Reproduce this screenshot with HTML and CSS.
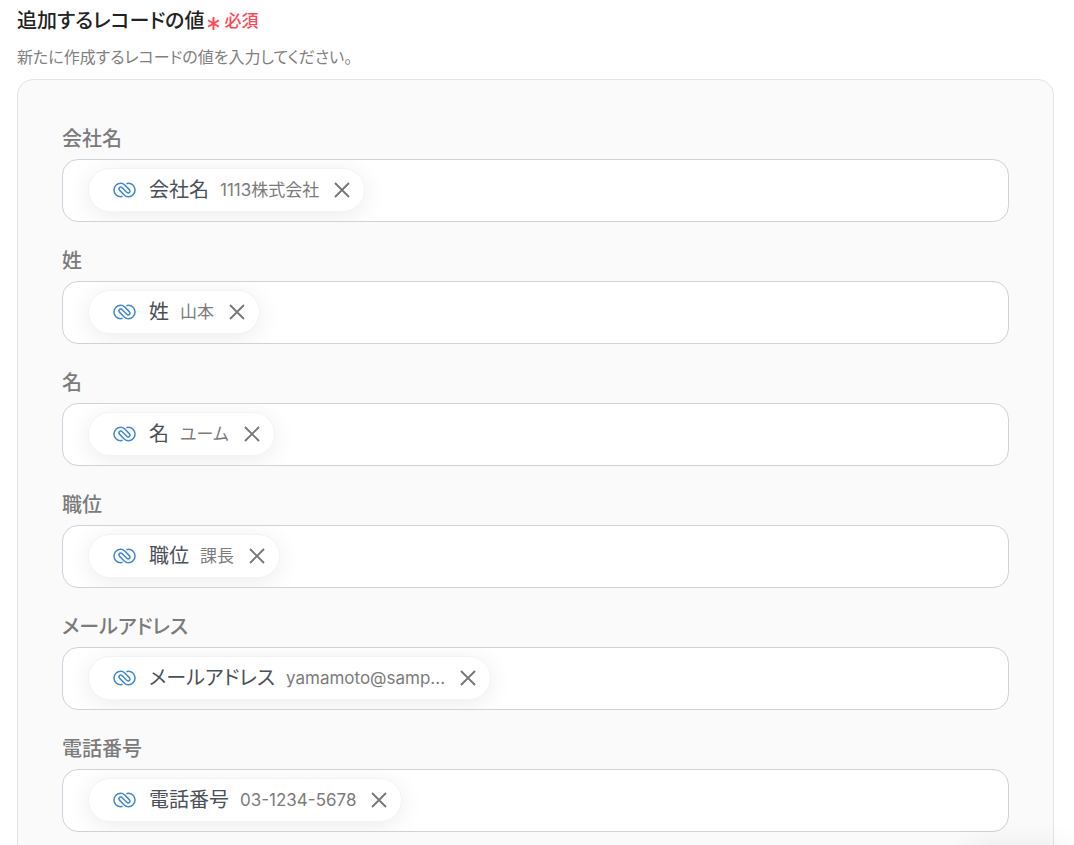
FILE: index.html
```html
<!DOCTYPE html>
<html lang="ja">
<head>
<meta charset="UTF-8">
<meta name="viewport" content="width=device-width, initial-scale=1.0">
<title>追加するレコードの値</title>
<link rel="stylesheet" href="styles.css">
</head>
<body>
<svg class="sprite" aria-hidden="true">
    <symbol id="icon-link" viewBox="0 0 24 16">
        <path d="M10 14.6C9.3 14.9 8.6 15 8 15A7 7 0 0 1 8 1C9.700 1 11 1.600 12 2.600L17 7.600C19 9.600 16.400 12.400 14.400 10.400L9.600 5.600C7.600 3.600 5 6.400 7 8.400L12 13.400C13 14.400 14.300 15 16 15A7 7 0 0 0 16 1C15.400 1 14.700 1.100 14 1.400"/>
    </symbol>
    <symbol id="icon-close" viewBox="0 0 16 16">
        <path d="M1 1L15 15M15 1L1 15"/>
    </symbol>
</svg>
<main class="container">
    <div class="heading">
        <h1 class="title">追加するレコードの値</h1>
        <span class="required">
            <svg class="asterisk" viewBox="0 0 12 12" aria-hidden="true"><path d="M6 0V12M1 3L11 9M11 3L1 9"/></svg>
            必須
        </span>
    </div>
    <p class="description">新たに作成するレコードの値を入力してください。</p>
    <form class="panel">
        <div class="field">
            <label class="label" for="company">会社名</label>
            <div class="input-box">
                <span class="chip">
                    <svg class="link-icon"><use href="#icon-link"/></svg>
                    <span class="chip-name">会社名</span>
                    <span class="chip-value">1113株式会社</span>
                    <button class="remove-btn" type="button" aria-label="削除"><svg class="close-icon"><use href="#icon-close"/></svg></button>
                </span>
                <input class="text-input" id="company" type="text">
            </div>
        </div>
        <div class="field">
            <label class="label" for="lastName">姓</label>
            <div class="input-box">
                <span class="chip">
                    <svg class="link-icon"><use href="#icon-link"/></svg>
                    <span class="chip-name">姓</span>
                    <span class="chip-value">山本</span>
                    <button class="remove-btn" type="button" aria-label="削除"><svg class="close-icon"><use href="#icon-close"/></svg></button>
                </span>
                <input class="text-input" id="lastName" type="text">
            </div>
        </div>
        <div class="field">
            <label class="label" for="firstName">名</label>
            <div class="input-box">
                <span class="chip">
                    <svg class="link-icon"><use href="#icon-link"/></svg>
                    <span class="chip-name">名</span>
                    <span class="chip-value">ユーム</span>
                    <button class="remove-btn" type="button" aria-label="削除"><svg class="close-icon"><use href="#icon-close"/></svg></button>
                </span>
                <input class="text-input" id="firstName" type="text">
            </div>
        </div>
        <div class="field">
            <label class="label" for="position">職位</label>
            <div class="input-box">
                <span class="chip">
                    <svg class="link-icon"><use href="#icon-link"/></svg>
                    <span class="chip-name">職位</span>
                    <span class="chip-value">課長</span>
                    <button class="remove-btn" type="button" aria-label="削除"><svg class="close-icon"><use href="#icon-close"/></svg></button>
                </span>
                <input class="text-input" id="position" type="text">
            </div>
        </div>
        <div class="field">
            <label class="label" for="email">メールアドレス</label>
            <div class="input-box">
                <span class="chip">
                    <svg class="link-icon"><use href="#icon-link"/></svg>
                    <span class="chip-name">メールアドレス</span>
                    <span class="chip-value">yamamoto@samp...</span>
                    <button class="remove-btn" type="button" aria-label="削除"><svg class="close-icon"><use href="#icon-close"/></svg></button>
                </span>
                <input class="text-input" id="email" type="text">
            </div>
        </div>
        <div class="field">
            <label class="label" for="phone">電話番号</label>
            <div class="input-box">
                <span class="chip">
                    <svg class="link-icon"><use href="#icon-link"/></svg>
                    <span class="chip-name">電話番号</span>
                    <span class="chip-value">03-1234-5678</span>
                    <button class="remove-btn" type="button" aria-label="削除"><svg class="close-icon"><use href="#icon-close"/></svg></button>
                </span>
                <input class="text-input" id="phone" type="text">
            </div>
        </div>
    </form>
</main>
<div class="bottom-bar"></div>
</body>
</html>
```
FILE: styles.css
```css
* {
    box-sizing: border-box;
}
body {
    margin: 0;
    background-color: #fff;
    color: #222;
    font-family: Inter, "Noto Sans CJK JP", sans-serif;
    font-feature-settings: "palt";
}
.sprite {
    display: none;
}
.container {
    padding: 8px 20px 20px 17px;
}
.heading {
    display: flex;
    align-items: center;
    gap: 3px;
}
.title {
    margin: 0;
    font-size: 20px;
    font-weight: 500;
    line-height: 24px;
}
.required {
    display: flex;
    align-items: center;
    gap: 4px;
    color: #ff4757;
    font-size: 17px;
    font-weight: 500;
    line-height: 26px;
}
.asterisk {
    width: 13px;
    height: 13px;
    margin-top: 4px;
    fill: none;
    stroke: currentColor;
    stroke-width: 1.8;
}
.description {
    margin: 13px 0 12px;
    color: #808080;
    font-size: 16px;
    line-height: 20px;
}
.panel {
    display: flex;
    flex-direction: column;
    gap: 25px;
    padding: 45px 44px;
    border: 1px solid #e2e3e4;
    border-radius: 16px;
    background-color: #fafafa;
}
.label {
    display: block;
    margin-bottom: 6px;
    color: #7b7b7b;
    font-size: 20px;
    font-weight: 500;
    line-height: 28px;
}
.input-box {
    display: flex;
    align-items: center;
    height: 63px;
    padding: 0 25px 2px;
    overflow: hidden;
    border: 1px solid #cdd2db;
    border-radius: 16px;
    background-color: #fff;
}
.chip {
    display: flex;
    align-items: center;
    height: 44px;
    padding: 0 14px 0 24px;
    border: 1px solid #f3f3f3;
    border-radius: 22px;
    background-color: #fff;
    box-shadow: 0 4px 24px rgba(0, 0, 0, 0.08);
    white-space: nowrap;
}
.link-icon {
    width: 23px;
    height: 16px;
    margin-right: 13px;
    fill: none;
    stroke: #4289cf;
    stroke-width: 1.6;
}
.chip-name {
    margin-right: 11px;
    color: #4b5058;
    font-size: 20px;
    line-height: 28px;
}
.chip-value {
    margin-right: 15px;
    color: #7b7b7b;
    font-size: 17px;
    line-height: 28px;
}
.remove-btn {
    display: flex;
    padding: 0;
    border: none;
    background: none;
    color: #757575;
    cursor: pointer;
}
.close-icon {
    width: 16px;
    height: 16px;
    fill: none;
    stroke: currentColor;
    stroke-width: 1.8;
}
.text-input {
    flex: 1;
    min-width: 0;
    height: 40px;
    border: none;
    outline: none;
    background: none;
    font: inherit;
}
/* floating bar below the fold, only its shadow shows */
.bottom-bar {
    position: fixed;
    right: 0;
    bottom: -60px;
    width: 110px;
    height: 54px;
    border-radius: 16px;
    box-shadow: 0 0 32px rgba(0, 0, 0, 0.1);
}
```
